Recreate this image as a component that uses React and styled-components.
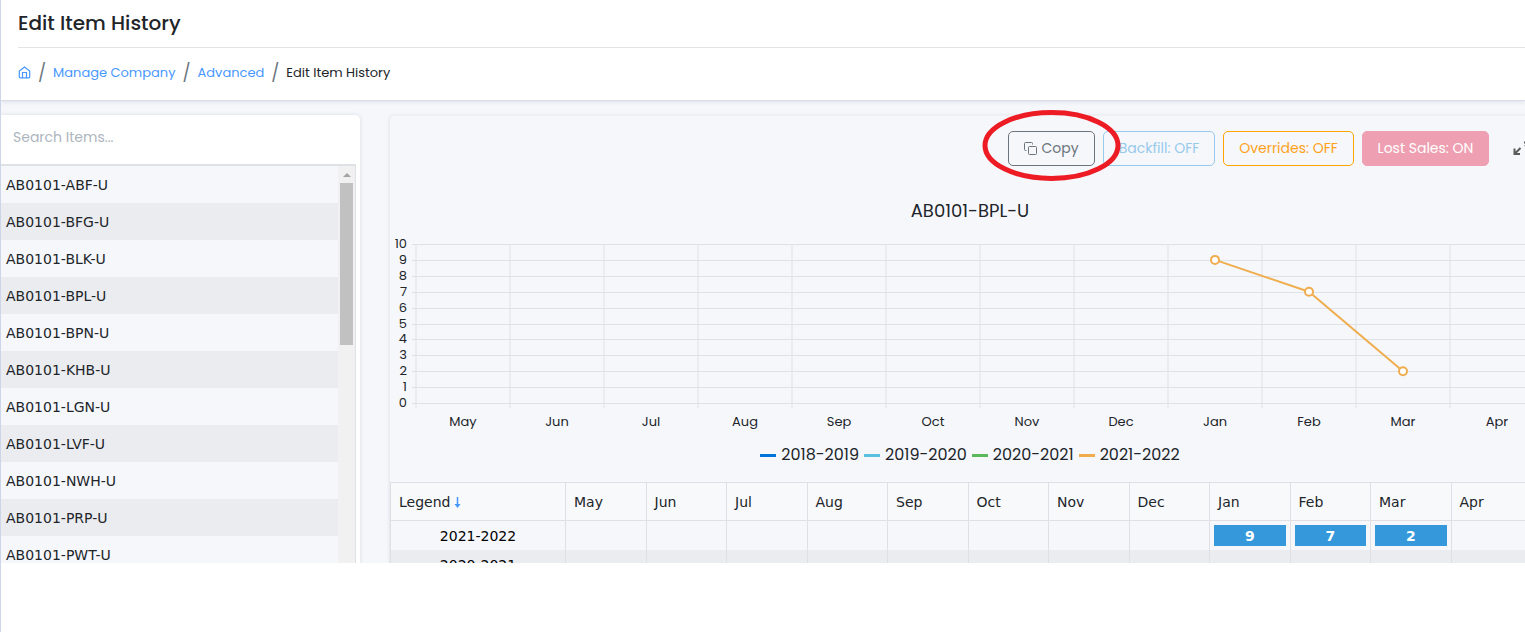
import React from "react";
import styled, { createGlobalStyle } from "styled-components";

const GlobalStyle = createGlobalStyle`
  *, *::before, *::after { box-sizing: border-box; }
  body { margin: 0; background: #fff; color: #212529; font-family: Poppins, Inter, "Open Sans", sans-serif; }
`;

const Page = styled.div`
  height: 100vh;
  display: flex;
  flex-direction: column;
  overflow: hidden;
  border-left: 1px solid #cdd5e8;
  padding-bottom: 69px;
`;
const Header = styled.header`
  position: relative;
  padding: 0 0 0 17px;
  height: 101px;
  flex: none;
  background: #fff;
  border-bottom: 1px solid #dadce8;
  box-shadow: 0 1px 4px rgba(60, 60, 110, 0.12);
`;
const Title = styled.h1`
  margin: 0;
  height: 48px;
  line-height: 46px;
  font-size: 20px;
  font-weight: 500;
  border-bottom: 1px solid #e2e3e5;
`;
const Crumbs = styled.nav`
  display: flex;
  align-items: center;
  gap: 7px;
  height: 49px;
  font-size: 13px;
`;
const CrumbLink = styled.a`
  display: flex;
  color: #4797ff;
  text-decoration: none;
`;
const Slash = styled.span`
  font-size: 17px;
  color: #6c757d;
`;
const Main = styled.main`
  flex: 1;
  min-height: 0;
  overflow: hidden;
  display: grid;
  grid-template-columns: 359px minmax(0, 1fr);
  gap: 29px;
  padding-top: 14px;
  background: #f5f7fb;
`;
const ListCard = styled.section`
  background: #fff;
  border-top-right-radius: 5px;
  box-shadow: 0 0 4px rgba(60, 60, 90, 0.14);
  display: flex;
  flex-direction: column;
  padding-right: 4px;
  min-height: 0;
`;
const Search = styled.input`
  border: 0;
  outline: 0;
  height: 49px;
  flex: none;
  padding: 0 12px 4px;
  background: transparent;
  font: inherit;
  font-size: 14px;
  &::placeholder { color: #adb5bd; opacity: 1; }
`;
const ListFrame = styled.div`
  flex: 1;
  min-height: 0;
  display: flex;
  border-top: 2px solid #dee2e6;
  border-right: 1px solid #dee2e6;
`;
const Items = styled.ul`
  flex: 1;
  margin: 0;
  padding: 0;
  list-style: none;
  overflow: hidden;
  background: #f5f7fb;
  font-family: Verdana, "DejaVu Sans", sans-serif;
  font-size: 14px;
`;
const Item = styled.li`
  height: 37px;
  line-height: 39px;
  padding-left: 5px;
  &:nth-child(even) { background: #ebecf0; }
`;
const Track = styled.div`
  width: 17px;
  background: #f1f1f1;
  display: flex;
  flex-direction: column;
  align-items: center;
`;
const Up = styled.span`
  height: 17px;
  display: flex;
  align-items: center;
`;
const Thumb = styled.span`
  width: 13px;
  height: 162px;
  background: #c1c1c1;
`;
const Detail = styled.section`
  margin-right: -25px;
  background: #f5f7fb;
  border-left: 1px solid #e9ebf0;
  border-top: 1px solid #eff0f4;
  border-top-left-radius: 5px;
  box-shadow: 0 0 3px rgba(60, 60, 90, 0.1);
`;
const Toolbar = styled.div`
  display: flex;
  justify-content: flex-end;
  align-items: center;
  gap: 8px;
  padding: 15px 20px 0 0;
`;
const Marked = styled.div`
  position: relative;
  z-index: 1;
`;
const Mark = styled.svg`
  position: absolute;
  left: -27px;
  top: -22px;
  width: 140px;
  height: 73px;
  pointer-events: none;
`;
const tones = {
  grey: "color:#6c757d;border-color:#6c757d;",
  blue: "color:#98caec;border-color:#98caec;",
  orange: "color:#ffa21c;border-color:#ffa500;",
  pink: "color:#fff;border-color:#ee9fb1;background:#ee9fb1;",
};
const Button = styled.button`
  display: flex;
  align-items: center;
  justify-content: center;
  gap: 4px;
  width: ${(p) => p.$width}px;
  height: 35px;
  padding: 0;
  border: 1px solid;
  border-radius: 5px;
  background: transparent;
  font: inherit;
  font-size: 14px;
  white-space: nowrap;
  ${(p) => tones[p.$tone]}
`;
const IconButton = styled.button`
  border: 0;
  padding: 0;
  margin-left: 16px;
  background: none;
  display: flex;
`;
const ChartTitle = styled.h2`
  margin: 32px 0 0;
  font-size: 18px;
  line-height: 26px;
  font-weight: 400;
  text-align: center;
`;
const Chart = styled.figure`
  margin: 20px 6px 0 26px;
`;
const Plot = styled.svg`
  display: block;
  width: 100%;
  height: 164px;
  overflow: visible;
  text { font-size: 13px; fill: #212529; text-anchor: end; }
`;
const Axis = styled.div`
  display: grid;
  grid-template-columns: repeat(12, 1fr);
  margin-top: 4px;
  font-size: 13px;
  line-height: 20px;
  text-align: center;
`;
const Legend = styled.figcaption`
  display: flex;
  justify-content: center;
  gap: 5px;
  margin: 11px 0 0 -20px;
  font-size: 16px;
  line-height: 24px;
`;
const LegendItem = styled.span`
  display: flex;
  align-items: center;
  gap: 5px;
  &::before {
    content: "";
    width: 16px;
    height: 3px;
    background: ${(p) => p.$color};
  }
`;
const Table = styled.table`
  width: calc(100% - 18px);
  margin-top: 15px;
  table-layout: fixed;
  border-collapse: collapse;
  font-family: Verdana, "DejaVu Sans", sans-serif;
  font-size: 14px;
  th, td { border: 1px solid #dee0e6; font-weight: 400; }
  thead th { height: 38px; padding: 0 8px; text-align: left; background: #f8f9fb; }
  thead th:first-child { width: 175px; }
  tbody th, tbody td { height: 29px; padding: 0 4px; text-align: center; color: #000; border-top: 0; border-bottom: 0; }
  tbody th { padding-top: 2px; }
  tbody tr:nth-child(even) { background: #ebecf0; }
`;
const Sort = styled.svg`
  margin-left: 4px;
  vertical-align: -2px;
`;
const Value = styled.span`
  display: block;
  height: 21px;
  line-height: 22px;
  background: #3498db;
  color: #fff;
  font-weight: 700;
`;

const items = ["ABF", "BFG", "BLK", "BPL", "BPN", "KHB", "LGN", "LVF", "NWH", "PRP", "PWT"];
const months = ["May", "Jun", "Jul", "Aug", "Sep", "Oct", "Nov", "Dec", "Jan", "Feb", "Mar", "Apr"];
const series = [
  ["2018-2019", "#0275d8"],
  ["2019-2020", "#5bc0de"],
  ["2020-2021", "#5cb85c"],
  ["2021-2022", "#f0ad4e"],
];
const sales = { Jan: 9, Feb: 7, Mar: 2 };
const points = months
  .map((m, i) => ({ m, x: `${((i + 0.5) / 12) * 100}%`, y: 159 - sales[m] * 15.9 }))
  .filter((p) => p.m in sales);
const rows = [
  ["2021-2022", sales],
  ["2020-2021", {}],
];

function HistoryChart() {
  return (
    <Plot role="img" aria-label="Item history by month">
      {Array.from({ length: 11 }, (_, n) => {
        const y = Math.round(159 - n * 15.9) + 0.5;
        return (
          <g key={n}>
            <line x1="-4" x2="100%" y1={y} y2={y} stroke="#dfe1e5" />
            <text x="-9" y={y + 3}>{n}</text>
          </g>
        );
      })}
      {Array.from({ length: 13 }, (_, n) => (
        <line key={n} x1={`${(n / 12) * 100}%`} x2={`${(n / 12) * 100}%`} y1="0" y2="164" stroke="#dfe1e5" />
      ))}
      {points.slice(1).map((p, i) => (
        <line key={p.m} x1={points[i].x} y1={points[i].y} x2={p.x} y2={p.y} stroke="#f0ad4e" strokeWidth="2" />
      ))}
      {points.map((p) => (
        <circle key={p.m} cx={p.x} cy={p.y} r="4" fill="#fff" stroke="#f0ad4e" strokeWidth="2" />
      ))}
    </Plot>
  );
}

export default function App() {
  return (
    <Page>
      <GlobalStyle />
      <Header>
        <Title>Edit Item History</Title>
        <Crumbs aria-label="Breadcrumb">
          <CrumbLink href="#" aria-label="Home">
            <svg width="13" height="13" viewBox="0 0 13 13" fill="none" stroke="currentColor" strokeWidth="1.2">
              <path d="M1.3 5 6.5 1 11.7 5V10.8Q11.7 11.8 10.7 11.8H2.3Q1.3 11.8 1.3 10.8ZM4.5 11.5V6.5H8.5V11.5" />
            </svg>
          </CrumbLink>
          <Slash>/</Slash>
          <CrumbLink href="#">Manage Company</CrumbLink>
          <Slash>/</Slash>
          <CrumbLink href="#">Advanced</CrumbLink>
          <Slash>/</Slash>
          <span aria-current="page">Edit Item History</span>
        </Crumbs>
      </Header>
      <Main>
        <ListCard>
          <Search type="search" placeholder="Search Items..." aria-label="Search Items" />
          <ListFrame>
            <Items>
              {items.map((s) => <Item key={s}>AB0101-{s}-U</Item>)}
            </Items>
            <Track aria-hidden="true">
              <Up><svg width="8" height="4" viewBox="0 0 8 4"><path d="M0 4 4 0 8 4Z" fill="#a3a3a3" /></svg></Up>
              <Thumb />
            </Track>
          </ListFrame>
        </ListCard>
        <Detail>
          <Toolbar>
            <Marked>
              <Button $tone="grey" $width={87}>
                <svg width="13" height="13" viewBox="0 0 13 13" fill="none" stroke="currentColor">
                  <rect x="4.5" y="4.5" width="8" height="8" rx="1" />
                  <path d="M2.5 8.5H1.5Q.5 8.5 .5 7.5V1.5Q.5.5 1.5 .5H7.5Q8.5.5 8.5 1.5V2.5" />
                </svg>
                Copy
              </Button>
              <Mark viewBox="0 0 140 73" fill="none" aria-hidden="true">
                <ellipse cx="70.5" cy="36.5" rx="66.5" ry="33" stroke="#ed1c24" strokeWidth="5" />
              </Mark>
            </Marked>
            <Button $tone="blue" $width={112}>Backfill: OFF</Button>
            <Button $tone="orange" $width={131}>Overrides: OFF</Button>
            <Button $tone="pink" $width={127}>Lost Sales: ON</Button>
            <IconButton aria-label="Expand">
              <svg width="17" height="15" viewBox="0 0 17 15" fill="none" stroke="#5b5b5b" strokeWidth="2">
                <path d="M1.5 7.5V13H7M2 12.5 7.5 7M11 1.5H16V7M15.5 2 12 5.5" />
              </svg>
            </IconButton>
          </Toolbar>
          <ChartTitle>AB0101-BPL-U</ChartTitle>
          <Chart>
            <HistoryChart />
            <Axis>{months.map((m) => <span key={m}>{m}</span>)}</Axis>
            <Legend>
              {series.map(([name, color]) => <LegendItem key={name} $color={color}>{name}</LegendItem>)}
            </Legend>
          </Chart>
          <Table>
            <thead>
              <tr>
                <th scope="col">
                  Legend
                  <Sort width="7" height="12" viewBox="0 0 7 12" aria-hidden="true">
                    <path d="M3.5 0V9" stroke="#4797ff" strokeWidth="1.5" />
                    <path d="M.5 7H6.5L3.5 11Z" fill="#4797ff" />
                  </Sort>
                </th>
                {months.map((m) => <th scope="col" key={m}>{m}</th>)}
              </tr>
            </thead>
            <tbody>
              {rows.map(([name, values]) => (
                <tr key={name}>
                  <th scope="row">{name}</th>
                  {months.map((m) => <td key={m}>{values[m] && <Value>{values[m]}</Value>}</td>)}
                </tr>
              ))}
            </tbody>
          </Table>
        </Detail>
      </Main>
    </Page>
  );
}
